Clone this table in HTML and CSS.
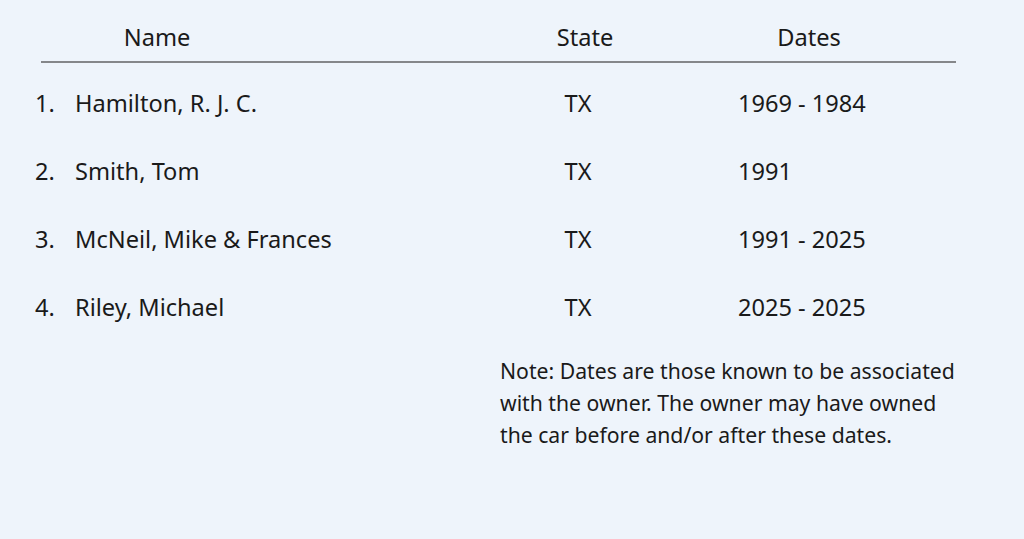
FILE: index.html
```html
<!DOCTYPE html>
<html lang="en">
<head>
<meta charset="utf-8">
<title>Owners</title>
<link rel="stylesheet" href="styles.css">
</head>
<body>
<main class="page">
  <div class="head">
    <div class="h-name">Name</div>
    <div class="h-gap"></div>
    <div class="h-state">State</div>
    <div class="h-dates">Dates</div>
  </div>
  <ol class="owners">
    <li class="owner"><span class="num">1.</span><span class="name">Hamilton, R. J. C.</span><span class="state">TX</span><span class="dates">1969 - 1984</span></li>
    <li class="owner"><span class="num">2.</span><span class="name">Smith, Tom</span><span class="state">TX</span><span class="dates">1991</span></li>
    <li class="owner"><span class="num">3.</span><span class="name">McNeil, Mike &amp; Frances</span><span class="state">TX</span><span class="dates">1991 - 2025</span></li>
    <li class="owner"><span class="num">4.</span><span class="name">Riley, Michael</span><span class="state">TX</span><span class="dates">2025 - 2025</span></li>
  </ol>
  <p class="note">Note: Dates are those known to be associated with the owner. The owner may have owned the car before and/or after these dates.</p>
</main>
</body>
</html>
```

FILE: styles.css
```css
html, body {
  margin: 0;
  padding: 0;
  background: #eef4fb;
}
body {
  font-family: "Noto Sans", "Open Sans", sans-serif;
  color: #1a1a1a;
  width: 1024px;
  height: 539px;
  overflow: hidden;
}
.page {
  display: flex;
  flex-direction: column;
}
.head {
  margin-left: 41px;
  width: 915px;
  display: grid;
  grid-template-columns: 232px 235px 154px 294px;
  font-size: 23.6px;
  line-height: 32px;
  padding-top: 21px;
  padding-bottom: 8px;
  border-bottom: 2px solid #85878a;
}
.head > div {
  text-align: center;
}
.owners {
  list-style: none;
  margin: 6px 0 0 35px;
  padding: 0;
}
.owner {
  display: grid;
  grid-template-columns: 40px 433px 140px 1fr;
  height: 68px;
  align-items: center;
  font-size: 23.6px;
  line-height: 32px;
}
.state {
  text-align: center;
}
.dates {
  padding-left: 90px;
}
.note {
  margin: 14px 0 0 500px;
  width: 470px;
  font-size: 21.2px;
  line-height: 32px;
}
```
